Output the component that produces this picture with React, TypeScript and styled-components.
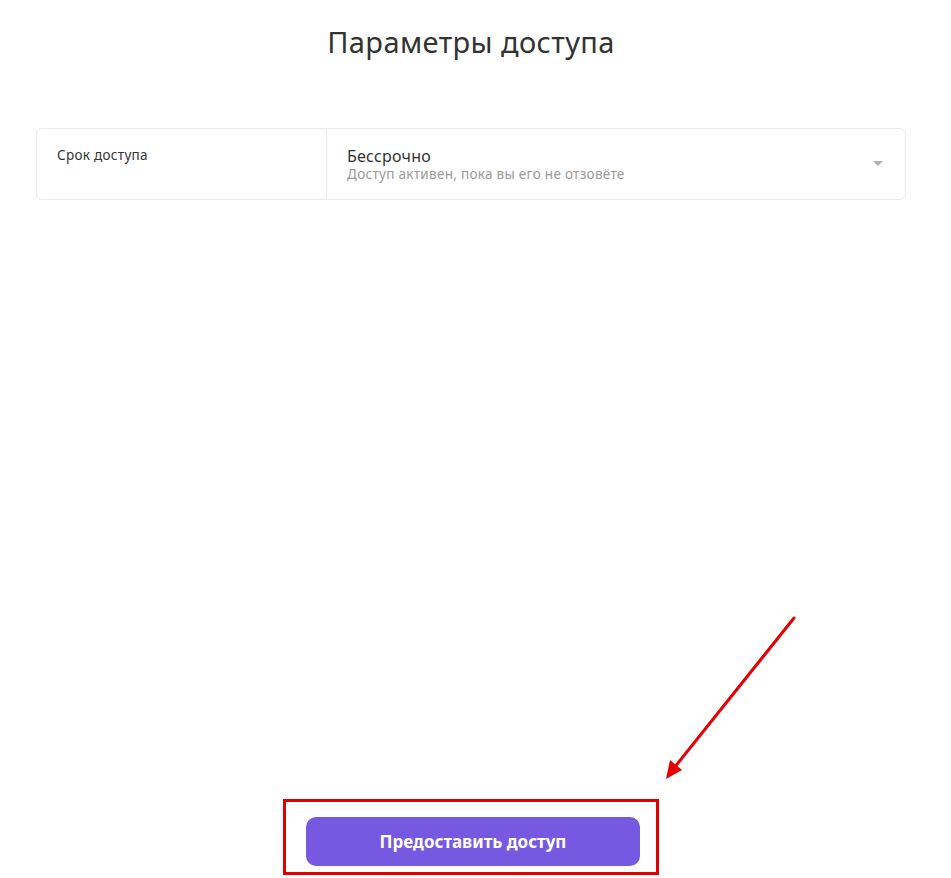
import React from 'react';
import styled, { createGlobalStyle } from 'styled-components';

const GlobalStyle = createGlobalStyle`
  body {
    margin: 0;
    background: #ffffff;
    font-family: "Noto Sans", "Open Sans", Arial, sans-serif;
  }
`;

const Page = styled.div`
  position: relative;
  height: 878px;
  display: flex;
  flex-direction: column;
  padding: 0 45px 0 36px;
  box-sizing: border-box;
`;

const Title = styled.h1`
  margin: 21px 0 0;
  text-align: center;
  font-size: 29px;
  font-weight: 400;
  color: #333333;
  letter-spacing: 0.4px;
  line-height: 42px;
`;

const Card = styled.div`
  margin-top: 65px;
  display: flex;
  height: 72px;
  border: 1px solid #ebebeb;
  border-radius: 6px;
  box-sizing: border-box;
`;

const LabelCell = styled.div`
  box-sizing: border-box;
  width: 290px;
  padding: 17px 20px;
  border-right: 1px solid #ebebeb;
  font-size: 13.5px;
  letter-spacing: 0.3px;
  color: #333333;
`;

const ValueCell = styled.div`
  flex: 1;
  display: flex;
  align-items: center;
  padding: 0 22px 0 20px;
`;

const ValueText = styled.div`
  flex: 1;
  display: flex;
  flex-direction: column;
  gap: 0;
`;

const ValueMain = styled.span`
  font-size: 16px;
  letter-spacing: 0.2px;
  color: #333333;
  line-height: 20px;
`;

const ValueHint = styled.span`
  font-size: 13.5px;
  letter-spacing: 0.3px;
  color: #9a9a9a;
  line-height: 17px;
`;

const Caret = styled.span`
  width: 0;
  height: 0;
  border-left: 5px solid transparent;
  border-right: 5px solid transparent;
  border-top: 5px solid #b0b0b0;
  margin-top: -2px;
`;

const Footer = styled.div`
  margin-top: auto;
  margin-bottom: 3px;
  display: flex;
  justify-content: center;
`;

const Highlight = styled.div`
  border: 3px solid #e00000;
  padding: 15px 16px 6px 20px;
`;

const Button = styled.button`
  width: 334px;
  height: 49px;
  border: none;
  border-radius: 10px;
  background: #7659e0;
  color: #ffffff;
  font-family: "Noto Sans", "Open Sans", Arial, sans-serif;
  font-size: 17px;
  font-weight: 700;
  cursor: pointer;
`;

const Arrow = styled.svg`
  position: absolute;
  left: 0;
  top: 0;
  pointer-events: none;
`;

const App: React.FC = () => (
  <>
    <GlobalStyle />
    <Page>
      <Title>Параметры доступа</Title>
      <Card>
        <LabelCell>Срок доступа</LabelCell>
        <ValueCell>
          <ValueText>
            <ValueMain>Бессрочно</ValueMain>
            <ValueHint>Доступ активен, пока вы его не отзовёте</ValueHint>
          </ValueText>
          <Caret />
        </ValueCell>
      </Card>
      <Footer>
        <Highlight>
          <Button>Предоставить доступ</Button>
        </Highlight>
      </Footer>
      <Arrow width="951" height="878">
        <line x1="794" y1="618" x2="674" y2="768" stroke="#e60000" strokeWidth="3" strokeLinecap="round" />
        <polygon points="666,779 670,760 682,770" fill="#e60000" />
      </Arrow>
    </Page>
  </>
);

export default App;
